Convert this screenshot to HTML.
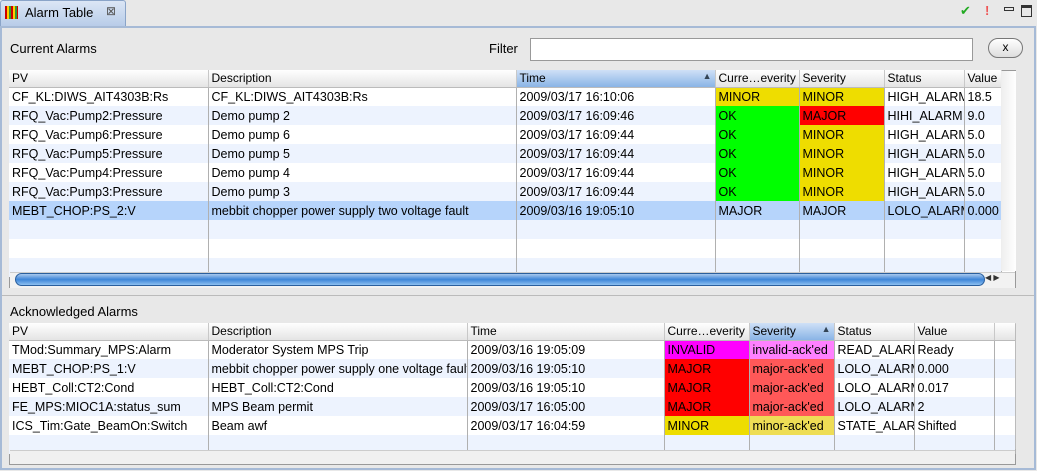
<!DOCTYPE html>
<html><head><meta charset="utf-8"><style>
*{box-sizing:border-box;margin:0;padding:0}
body{width:1037px;height:471px;background:#e8e8e8;font-family:"Liberation Sans",sans-serif;font-size:12px;color:#000;position:relative;overflow:hidden}
.abs{position:absolute}
.tab{left:0;top:0;width:126px;height:27px;background:linear-gradient(#dbe6f5,#b7cbe8);border:1px solid #8aa4c8;border-bottom:none;border-radius:3px 3px 0 0}
.frame{left:0;top:26px;width:1036px;height:444px;border:2px solid #a6bad6;background:#e8e8e8}
table{border-collapse:collapse;table-layout:fixed;position:absolute;font-size:12.5px}
td,th{height:19px;padding:0 3px;white-space:nowrap;overflow:hidden;border-right:1px solid #b0b0b0;text-align:left;font-weight:normal}
th{height:17px;font-size:12px;background:linear-gradient(#fff,#e4e4e4);border-bottom:1px solid #bbb;border-right:1px solid #c8c8c8}
th.sel{background:linear-gradient(#cfe0f7,#8ab4e6)}
tr.w td{background:#fff}tr.b td{background:#edf3fe}tr.s td{background:#b6d4fb}
.mi{background:#eedd00!important}.ok{background:#00ff00!important}.ma{background:#ff0000!important}
.iv{background:#ff00ff!important}.ivk{background:#ff80ff!important}.mak{background:#ff5858!important}.mik{background:#eedd55!important}
</style></head><body>
<div class="abs tab"></div>
<div class="abs" style="left:5px;top:6px;width:13px;height:13px;background:repeating-linear-gradient(90deg,#c00 0 2px,#fc0 2px 4px,#393 4px 6px)"></div>
<div class="abs" style="left:25px;top:5px;font-size:13px">Alarm Table</div>
<div class="abs" style="left:106px;top:4px;font-size:12px;color:#555">⊠</div>
<div class="abs" style="left:960px;top:3px;color:#2a2;font-size:13px">✔</div>
<div class="abs" style="left:985px;top:3px;color:#e55;font-weight:bold;font-size:13px">!</div>
<div class="abs" style="left:1004px;top:7px;width:10px;height:4px;border:1px solid #333"></div>
<div class="abs" style="left:1021px;top:5px;width:11px;height:12px;border:1px solid #333;border-top:3px solid #333"></div>
<div class="abs frame"></div>
<div class="abs" style="left:10px;top:41px;font-size:13px">Current Alarms</div>
<div class="abs" style="left:489px;top:41px;font-size:13px">Filter</div>
<div class="abs" style="left:530px;top:38px;width:443px;height:23px;background:#fff;border:1px solid #999"></div>
<div class="abs" style="left:988px;top:38px;width:35px;height:20px;background:linear-gradient(#fff,#ddd);border:1px solid #777;border-radius:10px;text-align:center;font-size:12px;line-height:17px">x</div>

<div class="abs" style="left:9px;top:70px;width:1007px;height:218px;background:#fff;border:1px solid #999"></div>
<table style="left:9px;top:70px;width:992px">
<colgroup><col style="width:199px"><col style="width:308px"><col style="width:199px"><col style="width:84px"><col style="width:85px"><col style="width:80px"><col style="width:37px"></colgroup>
<tr><th>PV</th><th>Description</th><th class="sel">Time<span style="float:right;color:#345;font-size:9px">▲</span></th><th>Curre…everity</th><th>Severity</th><th>Status</th><th>Value</th></tr>
<tr class="w"><td>CF_KL:DIWS_AIT4303B:Rs</td><td>CF_KL:DIWS_AIT4303B:Rs</td><td>2009/03/17 16:10:06</td><td class="mi">MINOR</td><td class="mi">MINOR</td><td>HIGH_ALARM</td><td>18.5</td></tr>
<tr class="b"><td>RFQ_Vac:Pump2:Pressure</td><td>Demo pump 2</td><td>2009/03/17 16:09:46</td><td class="ok">OK</td><td class="ma">MAJOR</td><td>HIHI_ALARM</td><td>9.0</td></tr>
<tr class="w"><td>RFQ_Vac:Pump6:Pressure</td><td>Demo pump 6</td><td>2009/03/17 16:09:44</td><td class="ok">OK</td><td class="mi">MINOR</td><td>HIGH_ALARM</td><td>5.0</td></tr>
<tr class="b"><td>RFQ_Vac:Pump5:Pressure</td><td>Demo pump 5</td><td>2009/03/17 16:09:44</td><td class="ok">OK</td><td class="mi">MINOR</td><td>HIGH_ALARM</td><td>5.0</td></tr>
<tr class="w"><td>RFQ_Vac:Pump4:Pressure</td><td>Demo pump 4</td><td>2009/03/17 16:09:44</td><td class="ok">OK</td><td class="mi">MINOR</td><td>HIGH_ALARM</td><td>5.0</td></tr>
<tr class="b"><td>RFQ_Vac:Pump3:Pressure</td><td>Demo pump 3</td><td>2009/03/17 16:09:44</td><td class="ok">OK</td><td class="mi">MINOR</td><td>HIGH_ALARM</td><td>5.0</td></tr>
<tr class="s"><td>MEBT_CHOP:PS_2:V</td><td>mebbit chopper power supply two voltage fault</td><td>2009/03/16 19:05:10</td><td>MAJOR</td><td>MAJOR</td><td>LOLO_ALARM</td><td>0.000</td></tr>
<tr class="b"><td></td><td></td><td></td><td></td><td></td><td></td><td></td></tr>
<tr class="w"><td></td><td></td><td></td><td></td><td></td><td></td><td></td></tr>
<tr class="b"><td style="height:14px"></td><td></td><td></td><td></td><td></td><td></td><td></td></tr>
</table>
<div class="abs" style="left:1001px;top:71px;width:15px;height:200px;background:linear-gradient(90deg,#eee,#fff)"></div>
<div class="abs" style="left:10px;top:272px;width:1005px;height:16px;background:#f2f2f2;border-top:1px solid #ccc"></div>
<div class="abs" style="left:15px;top:273px;width:970px;height:13px;border-radius:7px;background:linear-gradient(#a8c8ee,#3d85d8 50%,#8dc0f0);border:1px solid #2a5f9e"></div>
<div class="abs" style="left:985px;top:273px;font-size:8px;color:#333">◀ ▶</div>

<div class="abs" style="left:2px;top:295px;width:1032px;height:1px;background:#bbb"></div>
<div class="abs" style="left:10px;top:304px;font-size:13px">Acknowledged Alarms</div>
<div class="abs" style="left:9px;top:323px;width:1007px;height:142px;background:#fff;border:1px solid #999"></div>
<table style="left:9px;top:323px;width:1006px">
<colgroup><col style="width:199px"><col style="width:259px"><col style="width:197px"><col style="width:85px"><col style="width:85px"><col style="width:80px"><col style="width:80px"><col style="width:21px"></colgroup>
<tr><th>PV</th><th>Description</th><th>Time</th><th>Curre…everity</th><th class="sel">Severity<span style="float:right;color:#345;font-size:9px">▲</span></th><th>Status</th><th>Value</th><th></th></tr>
<tr class="w"><td>TMod:Summary_MPS:Alarm</td><td>Moderator System MPS Trip</td><td>2009/03/16 19:05:09</td><td class="iv">INVALID</td><td class="ivk">invalid-ack'ed</td><td>READ_ALARM</td><td>Ready</td><td></td></tr>
<tr class="b"><td>MEBT_CHOP:PS_1:V</td><td>mebbit chopper power supply one voltage fault</td><td>2009/03/16 19:05:10</td><td class="ma">MAJOR</td><td class="mak">major-ack'ed</td><td>LOLO_ALARM</td><td>0.000</td><td></td></tr>
<tr class="w"><td>HEBT_Coll:CT2:Cond</td><td>HEBT_Coll:CT2:Cond</td><td>2009/03/16 19:05:10</td><td class="ma">MAJOR</td><td class="mak">major-ack'ed</td><td>LOLO_ALARM</td><td>0.017</td><td></td></tr>
<tr class="b"><td>FE_MPS:MIOC1A:status_sum</td><td>MPS Beam permit</td><td>2009/03/17 16:05:00</td><td class="ma">MAJOR</td><td class="mak">major-ack'ed</td><td>LOLO_ALARM</td><td>2</td><td></td></tr>
<tr class="w"><td>ICS_Tim:Gate_BeamOn:Switch</td><td>Beam awf</td><td>2009/03/17 16:04:59</td><td class="mi">MINOR</td><td class="mik">minor-ack'ed</td><td>STATE_ALARM</td><td>Shifted</td><td></td></tr>
<tr class="b"><td style="height:14px"></td><td></td><td></td><td></td><td></td><td></td><td></td><td></td></tr>
</table>
<div class="abs" style="left:1015px;top:324px;width:1px;height:125px;background:#bbb"></div>
<div class="abs" style="left:10px;top:450px;width:1005px;height:14px;background:#f0f0f0;border-top:1px solid #ccc"></div>
</body></html>
